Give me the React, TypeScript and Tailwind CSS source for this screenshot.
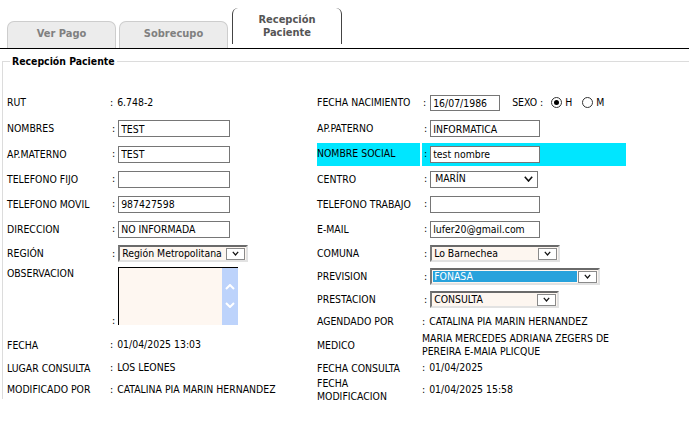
import React from "react";

function Chevron({ w = 9, h = 5, sw = 1.6 }: { w?: number; h?: number; sw?: number }) {
  return (
    <svg width={w} height={h + 1} viewBox={`0 0 ${w} ${h + 1}`} fill="none">
      <path d={`M0.8 0.8 L${w / 2} ${h} L${w - 0.8} 0.8`} stroke="#111" strokeWidth={sw} />
    </svg>
  );
}

function Label({ children, className = "" }: { children: React.ReactNode; className?: string }) {
  return <div className={`flex items-center leading-[13px] ${className}`}>{children}</div>;
}

function TextVal({ children }: { children: React.ReactNode }) {
  return (
    <div className="flex items-center whitespace-nowrap">
      <span>:</span>
      <span className="ml-[4px]">{children}</span>
    </div>
  );
}

function InputVal({ value, w = 112 }: { value: string; w?: number }) {
  return (
    <div className="flex items-center">
      <span className="ml-[2px]">:</span>
      <input
        readOnly
        value={value}
        style={{ width: w }}
        className="ml-[3px] h-[17px] border border-[#767676] bg-white px-[2px] text-black outline-none"
      />
    </div>
  );
}

function OldSelect({ value, w, highlight = false }: { value: string; w: number; highlight?: boolean }) {
  return (
    <div
      style={{ width: w }}
      className="flex h-[17px] items-center border-2 border-t-[#6a6a6a] border-l-[#7a7a7a] border-b-[#e2e2e2] border-r-[#e2e2e2] bg-[#fdf6f0]"
    >
      <div className="flex h-full min-w-0 flex-1 items-center pl-[1px]">
        {highlight ? (
          <span className="flex h-[11px] w-full items-center bg-[#27a2dc] pl-[1px] text-white">{value}</span>
        ) : (
          <span className="pl-[1px] whitespace-nowrap">{value}</span>
        )}
      </div>
      <span className="ml-[1px] mr-[1px] flex h-[12px] w-[19px] items-center justify-center border border-[#8a8a8a] bg-white">
        <Chevron w={7} h={4} sw={1.2} />
      </span>
    </div>
  );
}

function SelectVal(props: { value: string; w: number; highlight?: boolean }) {
  return (
    <div className="flex items-center">
      <span className="ml-[2px]">:</span>
      <div className="ml-[3px]">
        <OldSelect {...props} />
      </div>
    </div>
  );
}

export default function App() {
  return (
    <div className="relative h-[444px] w-[689px] overflow-hidden bg-white text-[10.4px] text-black font-['DejaVu_Sans_Condensed','DejaVu_Sans',sans-serif]">
      {/* Tabs */}
      <div className="flex h-[48px] items-end pl-[7px]">
        <div className="flex h-[27px] w-[109px] items-center justify-center rounded-t-[7px] border border-b-0 border-[#cdcdcd] bg-[#ececec] pb-[2px] text-[11px] font-bold text-[#808080]">
          Ver Pago
        </div>
        <div className="ml-[3px] flex h-[27px] w-[109px] items-center justify-center rounded-t-[7px] border border-b-0 border-[#cdcdcd] bg-[#ececec] pb-[2px] text-[11px] font-bold text-[#808080]">
          Sobrecupo
        </div>
        <div className="mb-[4px] ml-[4px] flex h-[36px] w-[110px] flex-col items-center justify-start rounded-t-[6px] border-x border-t-0 border-[#444] bg-white pt-[5px] text-center text-[11px] font-bold leading-[13px] text-[#555]">
          <span>Recepción</span>
          <span>Paciente</span>
        </div>
      </div>
      <div className="h-[1px] w-full bg-black" />

      {/* Fieldset */}
      <fieldset className="ml-[2px] mt-[5px] h-[345px] border-l border-t border-[#dcdcdc] pl-[4px]">
        <legend className="ml-[3px] px-[2px] font-bold">Recepción Paciente</legend>
        <div className="mt-[20px] grid grid-cols-[103px_207px_105px_204px] grid-rows-[26px_26px_25px_25px_25px_25px_24px_22px_24px_20px_27px_19px_24px]">
          {/* Row 1 */}
          <Label>RUT</Label>
          <TextVal>6.748-2</TextVal>
          <Label>FECHA NACIMIENTO</Label>
          <div className="flex items-center">
            <span className="ml-[1px]">:</span>
            <input
              readOnly
              value="16/07/1986"
              className="ml-[4px] h-[16px] w-[70px] border border-[#767676] bg-white px-[2px] outline-none"
            />
            <span className="ml-[12px]">SEXO :</span>
            <span className="ml-[8px] flex h-[11px] w-[11px] items-center justify-center rounded-full border border-[#333] bg-white">
              <span className="h-[5px] w-[5px] rounded-full bg-black" />
            </span>
            <span className="ml-[3px]">H</span>
            <span className="ml-[10px] h-[11px] w-[11px] rounded-full border border-[#333] bg-white" />
            <span className="ml-[3px]">M</span>
          </div>

          {/* Row 2 */}
          <Label>NOMBRES</Label>
          <InputVal value="TEST" />
          <Label>AP.PATERNO</Label>
          <InputVal value="INFORMATICA" w={110} />

          {/* Row 3 */}
          <Label>AP.MATERNO</Label>
          <InputVal value="TEST" />
          <div className="my-[1px] mr-[2px] flex items-center bg-[#00e6ff]">NOMBRE SOCIAL</div>
          <div className="my-[1px] flex items-center bg-[#00e6ff]">
            <span className="ml-[2px]">:</span>
            <input
              readOnly
              value="test nombre"
              className="ml-[3px] h-[17px] w-[110px] border border-[#767676] bg-white px-[2px] outline-none"
            />
          </div>

          {/* Row 4 */}
          <Label>TELEFONO FIJO</Label>
          <InputVal value="" />
          <Label>CENTRO</Label>
          <div className="flex items-center">
            <span className="ml-[2px]">:</span>
            <div className="ml-[3px] flex h-[17px] w-[108px] items-center justify-between border border-[#767676] bg-white pl-[4px] pr-[4px]">
              <span>MARÍN</span>
              <Chevron w={9} h={5} sw={1.6} />
            </div>
          </div>

          {/* Row 5 */}
          <Label>TELEFONO MOVIL</Label>
          <InputVal value="987427598" />
          <Label>TELEFONO TRABAJO</Label>
          <InputVal value="" w={110} />

          {/* Row 6 */}
          <Label>DIRECCION</Label>
          <InputVal value="NO INFORMADA" />
          <Label>E-MAIL</Label>
          <InputVal value="lufer20@gmail.com" w={110} />

          {/* Row 7 */}
          <Label>REGIÓN</Label>
          <SelectVal value="Región Metropolitana" w={130} />
          <Label>COMUNA</Label>
          <SelectVal value="Lo Barnechea" w={130} />

          {/* Rows 8-10 left: observacion */}
          <div className="row-span-3 pt-[1px] leading-[13px]">OBSERVACION</div>
          <div className="row-span-3 flex items-start">
            <span className="ml-[2px] mt-[47px]">:</span>
            <div className="ml-[3px] mt-[1px] flex h-[58px] w-[120px] border-l border-t border-black bg-[#fef7f1]">
              <div className="flex-1" />
              <div className="flex w-[16px] flex-col items-center justify-center gap-[12px] bg-[#bdd3fb]">
                <svg width="10" height="6" viewBox="0 0 10 6" fill="none">
                  <path d="M1 5 L5 1 L9 5" stroke="#fff" strokeWidth="2" />
                </svg>
                <svg width="10" height="6" viewBox="0 0 10 6" fill="none">
                  <path d="M1 1 L5 5 L9 1" stroke="#fff" strokeWidth="2" />
                </svg>
              </div>
            </div>
          </div>
          <Label>PREVISION</Label>
          <SelectVal value="FONASA" w={170} highlight />

          <Label>PRESTACION</Label>
          <SelectVal value="CONSULTA" w={129} />

          <Label>AGENDADO POR</Label>
          <TextVal>CATALINA PIA MARIN HERNANDEZ</TextVal>

          {/* Row 11 */}
          <Label>FECHA</Label>
          <TextVal>01/04/2025 13:03</TextVal>
          <Label>MEDICO</Label>
          <div className="flex items-center leading-[13px]">
            <span>
              MARIA MERCEDES ADRIANA ZEGERS DE
              <br />
              PEREIRA E-MAIA PLICQUE
            </span>
          </div>

          {/* Row 12 */}
          <Label>LUGAR CONSULTA</Label>
          <TextVal>LOS LEONES</TextVal>
          <Label>FECHA CONSULTA</Label>
          <TextVal>01/04/2025</TextVal>

          {/* Row 13 */}
          <Label>MODIFICADO POR</Label>
          <TextVal>CATALINA PIA MARIN HERNANDEZ</TextVal>
          <Label>
            <span>
              FECHA
              <br />
              MODIFICACION
            </span>
          </Label>
          <TextVal>01/04/2025 15:58</TextVal>
        </div>
      </fieldset>
    </div>
  );
}
